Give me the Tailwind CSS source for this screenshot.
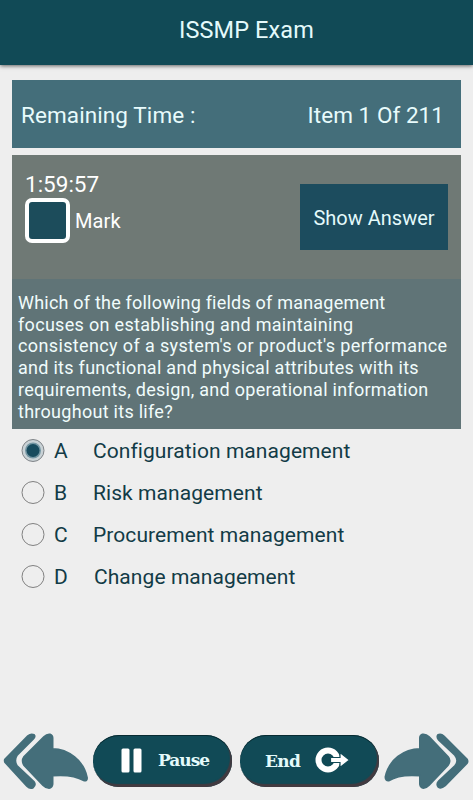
<!DOCTYPE html>
<html lang="en">
<head>
<meta charset="utf-8">
<title>ISSMP Exam</title>
<script src="https://cdn.jsdelivr.net/npm/@tailwindcss/browser@4"></script>
</head>
<body class="bg-[#eeeeee]">
<div class="w-[473px] h-[800px] overflow-hidden flex flex-col bg-[#eeeeee] font-[Roboto,sans-serif] whitespace-nowrap">
  <header class="h-[65px] shrink-0 bg-[#114a56] pl-[179px] pt-[15px] text-[23.5px] leading-[30px] tracking-[0.1px] text-[#e4fafb] shadow-[0_1px_4px_rgba(0,0,0,0.6)]">ISSMP Exam</header>

  <main class="flex-1 flex flex-col pl-3 pr-3 pt-[15px]">
    <section class="w-[449px] h-[68px] shrink-0 bg-[#446e7a] flex items-center justify-between pl-[9px] pr-[17px] pt-[2px] text-[22.5px] leading-[30px] text-[#e8fbfc]">
      <span class="tracking-[0.1px]">Remaining Time :</span>
      <span class="tracking-[0.05px]">Item 1 Of 211</span>
    </section>

    <section class="mt-[7px] w-[449px] h-[124px] shrink-0 bg-[#6f7975] flex justify-between pl-[13px] pr-[13px] text-white">
      <div class="pt-[16px]">
        <div class="text-[22.5px] leading-[27px] tracking-[0px]">1:59:57</div>
        <div class="flex items-center gap-[5px]">
          <div class="size-[45px] rounded-[7px] border-4 border-white bg-[#1c4c5b]"></div>
          <span class="text-[20px] tracking-[0.1px]">Mark</span>
        </div>
      </div>
      <button class="mt-[29px] w-[148px] h-[66px] pt-px bg-[#1c4c5e] text-[20px] tracking-[0px] text-[#e4fafb]">Show Answer</button>
    </section>

    <p class="w-[449px] h-[150px] shrink-0 bg-[#607477] pl-[6px] pt-[13px] text-[18px] leading-[21.7px] text-[#f0fcfc]"><span class="tracking-[0.21px]">Which of the following fields of management</span><br><span class="tracking-[0.31px]">focuses on establishing and maintaining</span><br><span class="tracking-[0.37px]">consistency of a system's or product's performance</span><br><span class="tracking-[0.28px]">and its functional and physical attributes with its</span><br><span class="tracking-[0.27px]">requirements, design, and operational information</span><br><span class="tracking-[0.28px]">throughout its life?</span></p>

    <ul class="pl-[9px] text-[21px] tracking-[0.07px] text-[#123b46]">
      <li class="h-[42px] flex items-center">
        <svg class="w-[24px] h-[24px]" viewBox="0 0 24 24"><circle cx="12" cy="12.500" r="11" fill="#c9d2d6" stroke="#808488"/><circle cx="12" cy="12.500" r="8" fill="#7396a3"/><circle cx="12" cy="12.500" r="6.500" fill="#174b5e"/></svg>
        <span class="pl-[9px] w-[48px] pt-[3px]">A</span><span class="pt-[3px]">Configuration management</span>
      </li>
      <li class="h-[42px] flex items-center">
        <svg class="w-[24px] h-[24px]" viewBox="0 0 24 24"><circle cx="12" cy="12.500" r="11" fill="none" stroke="#808080"/></svg>
        <span class="pl-[9px] w-[48px] pt-[3px]">B</span><span class="pt-[3px]">Risk management</span>
      </li>
      <li class="h-[42px] flex items-center">
        <svg class="w-[24px] h-[24px]" viewBox="0 0 24 24"><circle cx="12" cy="12.500" r="11" fill="none" stroke="#808080"/></svg>
        <span class="pl-[9px] w-[48px] pt-[3px]">C</span><span class="pt-[3px]">Procurement management</span>
      </li>
      <li class="h-[42px] flex items-center">
        <svg class="w-[24px] h-[24px]" viewBox="0 0 24 24"><circle cx="12" cy="12.500" r="11" fill="none" stroke="#808080"/></svg>
        <span class="pl-[9px] w-[49px] pt-[3px]">D</span><span class="pt-[3px]">Change management</span>
      </li>
    </ul>
  </main>

  <footer class="h-[70px] shrink-0 flex items-start font-['DejaVu_Serif',serif] font-bold text-[17px] text-[#e4fafb]">
    <svg class="w-[92px] h-[70px] shrink-0" viewBox="0 730 92 70" fill="#446e7a" stroke="#446e7a" stroke-width="2" stroke-linejoin="round">
      <path d="M5 759.500L28 736Q31 733.500 34 735Q35.500 736.500 33 739L17 755Q13.500 760.500 17 766L34 782Q36 785 33 787.500Q30 789 27 786L5 762Q4.500 760.500 5 759.500Z"/>
      <path d="M24 757L44 737Q47 734 50 734.500Q52.500 735.500 52.500 738V749C68 749 84 761 87 778Q87 781 84 780.500C75 775 65 774.500 52.500 775.500V784Q52 787.500 49 788Q46 788 43 785L24 765Q21.500 760.500 24 757Z"/>
    </svg>
    <div class="mt-[5px] ml-px w-[139px] h-[52px] shrink-0 rounded-full bg-[#114a56] shadow-[inset_-2px_-3px_1px_#423a40,inset_0_1px_0_#082b32] flex items-center pl-[28px]">
      <svg class="w-[21px] h-[25px] -mt-px" viewBox="0 0 21 25" fill="#fff"><rect x="0.500" y="0.500" width="8" height="24" rx="1.500"/><rect x="12.500" y="0.500" width="8" height="24" rx="1.500"/></svg>
      <span class="ml-[16px] -mt-px tracking-[-1px]">Pause</span>
    </div>
    <div class="mt-[5px] ml-[8px] w-[139px] h-[52px] shrink-0 rounded-full bg-[#114a56] shadow-[inset_-2px_-3px_1px_#423a40,inset_0_1px_0_#082b32] flex items-center pl-[25px]">
      <span class="w-[50px] mt-px tracking-[-0.7px]">End</span>
      <svg class="w-[35px] h-[27px] -mt-[2px]" viewBox="0 0 35 27"><circle cx="13" cy="13" r="9.500" fill="none" stroke="#fff" stroke-width="6"/><path d="M15.500 10.500H25V5.500L34.500 13L25 20.500V15.500H15.500Z" fill="#fff" stroke="#114a56" stroke-width="1.200"/></svg>
    </div>
    <svg class="w-[94px] h-[70px] shrink-0" viewBox="379 730 94 70" fill="#446e7a" stroke="#446e7a" stroke-width="2" stroke-linejoin="round">
      <path d="M467 759.500L444 736.500Q441 733.500 438 735Q436.500 737 439 740L455 755Q459.500 760.500 455 766L439 781Q436 784 438.500 787Q441 789 445 785.500L467 763Q468 761.500 467 759.500Z"/>
      <path d="M448 757L429 737Q426 734 422.500 734.500Q420 735.500 420 738V749C404 749 389 760 385.500 777Q385.500 781 389 780.500C397 775 407 774.500 420 775.500V784Q420.500 787.500 423.500 788Q426 788 429 785L448 765Q451 760.500 448 757Z"/>
    </svg>
  </footer>
</div>
</body>
</html>
